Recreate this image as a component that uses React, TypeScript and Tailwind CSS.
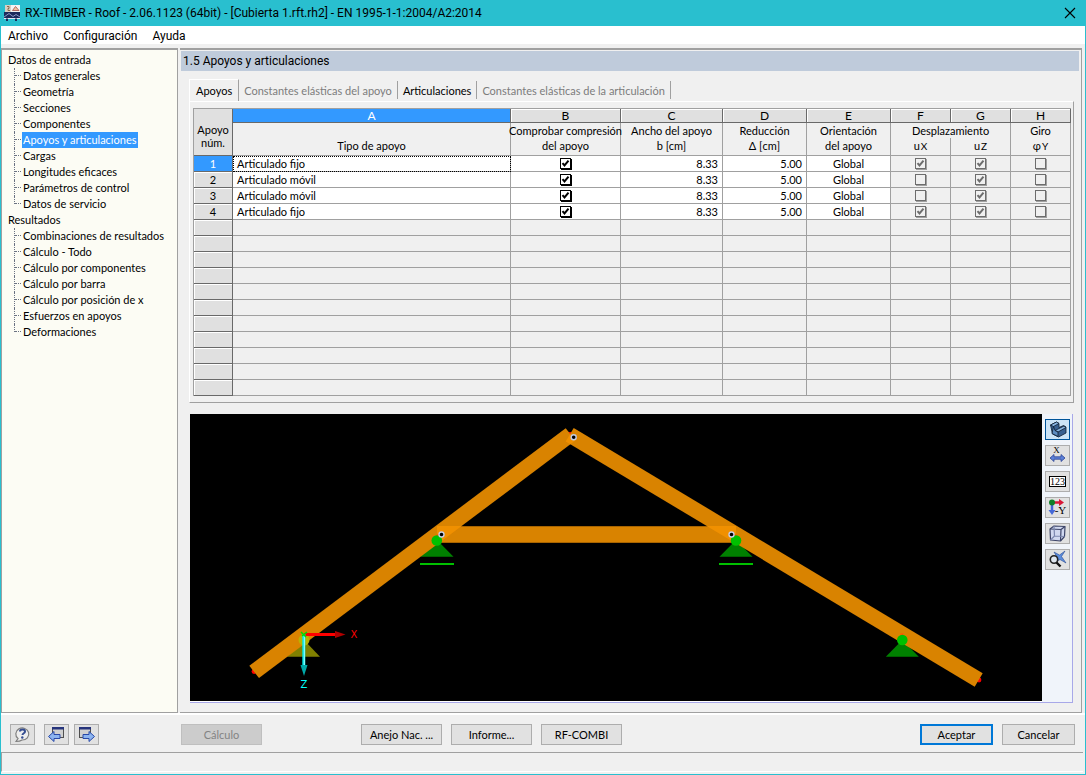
import { ReactNode } from "react";
import clsx from "clsx";

const inputItems = [
  "Datos generales",
  "Geometría",
  "Secciones",
  "Componentes",
  "Apoyos y articulaciones",
  "Cargas",
  "Longitudes eficaces",
  "Parámetros de control",
  "Datos de servicio",
];

const resultItems = [
  "Combinaciones de resultados",
  "Cálculo - Todo",
  "Cálculo por componentes",
  "Cálculo por barra",
  "Cálculo por posición de x",
  "Esfuerzos en apoyos",
  "Deformaciones",
];

type Support = {
  type: string;
  width: string;
  reduction: string;
  orientation: string;
  ux: boolean;
  uz: boolean;
  phi: boolean;
};

const supports: Support[] = [
  { type: "Articulado fijo", width: "8.33", reduction: "5.00", orientation: "Global", ux: true, uz: true, phi: false },
  { type: "Articulado móvil", width: "8.33", reduction: "5.00", orientation: "Global", ux: false, uz: true, phi: false },
  { type: "Articulado móvil", width: "8.33", reduction: "5.00", orientation: "Global", ux: false, uz: true, phi: false },
  { type: "Articulado fijo", width: "8.33", reduction: "5.00", orientation: "Global", ux: true, uz: true, phi: false },
];

const emptyRows = Array.from({ length: 11 }, (_, i) => i);
const columns = ["A", "B", "C", "D", "E", "F", "G", "H"];

function AppIcon() {
  return (
    <svg width="16" height="16" viewBox="0 0 16 16" aria-hidden="true">
      <rect x="1" width="6" height="7" fill="#d8cfc4" />
      <path d="M3 1.5h2v2H4v2h2" stroke="#8a6a4a" fill="none" />
      <rect x="7" width="9" height="7" fill="#f4f4f4" />
      <path d="M8.5 5.5l3-4 3.5 4z" fill="#f0c0a0" stroke="#a05048" strokeWidth=".8" />
      <rect y="7" width="16" height="6" fill="#1c2a5c" />
      <path d="M0 12l5-3.5 4 3 3-2 4 2.5" stroke="#8c98c4" fill="none" />
      <path d="M0 13.5h16" stroke="#e4e8f4" />
      <path d="M3 16v-2.5M12 16v-2.5" stroke="#1c2a5c" strokeWidth="2" />
    </svg>
  );
}

function TreeGroup({ label, items, active }: { label: string; items: string[]; active?: string }) {
  return (
    <li>
      <a href="#" className="block">{label}</a>
      <ul className="ml-1.5">
        {items.map((item, i) => (
          <li key={item} className="flex h-4">
            <span
              className={clsx(
                "w-px border-l border-dotted border-gray-500",
                i === items.length - 1 ? "h-2" : "h-4"
              )}
            />
            <span className="mr-px h-2 w-1.5 border-b border-dotted border-gray-500" />
            <a href="#" className={clsx("pr-0.5 pl-px", item === active && "bg-[#3399ff] text-white")}>
              {item}
            </a>
          </li>
        ))}
      </ul>
    </li>
  );
}

function Check({ label, checked, disabled }: { label: string; checked: boolean; disabled?: boolean }) {
  return (
    <span className="mx-auto grid w-[11px]">
      <input
        type="checkbox"
        aria-label={label}
        defaultChecked={checked}
        disabled={disabled}
        className="peer col-start-1 row-start-1 size-[11px] appearance-none border border-black bg-white shadow-[1px_1px_0_#000] disabled:border-[#6d6d6d] disabled:bg-[#f0f0f0] disabled:shadow-[1px_1px_0_#a0a0a0]"
      />
      <svg
        viewBox="0 0 11 11"
        className="pointer-events-none invisible col-start-1 row-start-1 size-[11px] text-black peer-checked:visible peer-disabled:text-[#6d6d6d]"
      >
        <path d="M2.5 5.2l2 2.3 4-4.8" fill="none" stroke="currentColor" strokeWidth="2" />
      </svg>
    </span>
  );
}

function RowHead({ children, active }: { children?: ReactNode; active?: boolean }) {
  return (
    <th
      scope="row"
      className={clsx(
        "h-4 border-r border-b border-[#696969] p-0 font-normal",
        active
          ? "bg-[#3399ff] text-white"
          : "bg-[#e0e0e0] shadow-[inset_1px_1px_0_#fff]"
      )}
    >
      {children}
    </th>
  );
}

const cell = "h-4 border-r border-b border-[#a0a0a0] p-0";
const headCell = "border-r border-b border-[#a0a0a0] p-0 align-top font-normal whitespace-nowrap";

function SupportsTable() {
  return (
    <table className="w-full table-fixed border-separate border-spacing-0 border-t border-l border-[#a0a0a0] text-[11px] leading-[15px]">
      <colgroup>
        <col className="w-[39px]" />
        <col />
        <col className="w-[110px]" />
        <col className="w-[102px]" />
        <col className="w-[84px]" />
        <col className="w-[84px]" />
        <col className="w-[60px]" />
        <col className="w-[60px]" />
        <col className="w-[60px]" />
      </colgroup>
      <thead>
        <tr>
          <th
            rowSpan={3}
            className="border-r border-b border-[#696969] bg-[#e0e0e0] p-0 pt-2 leading-[13px] font-normal"
          >
            Apoyo
            <br />
            núm.
          </th>
          {columns.map((letter) => (
            <th
              key={letter}
              className={clsx(
                "h-[14px] border-r border-b border-[#696969] p-0 text-xs leading-[13px] font-normal",
                letter === "A" ? "bg-[#3399ff] text-white" : "bg-[#e0e0e0] shadow-[inset_1px_1px_0_#fff]"
              )}
            >
              {letter}
            </th>
          ))}
        </tr>
        <tr>
          <th rowSpan={2} className={headCell}>
            <br />
            Tipo de apoyo
          </th>
          <th rowSpan={2} className={headCell}>
            <span className="flex justify-center">Comprobar compresión</span>
            del apoyo
          </th>
          <th rowSpan={2} className={headCell}>
            Ancho del apoyo
            <br />b [cm]
          </th>
          <th rowSpan={2} className={headCell}>
            Reducción
            <br />Δ [cm]
          </th>
          <th rowSpan={2} className={headCell}>
            Orientación
            <br />
            del apoyo
          </th>
          <th colSpan={2} className="h-[15px] border-r border-[#a0a0a0] p-0 font-normal">
            Desplazamiento
          </th>
          <th className="h-[15px] border-r border-[#a0a0a0] p-0 font-normal">Giro</th>
        </tr>
        <tr>
          <th className={clsx(headCell, "h-[18px]")}>
            u<span className="ml-px text-[10px]">X</span>
          </th>
          <th className={clsx(headCell, "h-[18px]")}>
            u<span className="ml-px text-[10px]">Z</span>
          </th>
          <th className={clsx(headCell, "h-[18px]")}>
            φ<span className="ml-px text-[10px]">Y</span>
          </th>
        </tr>
      </thead>
      <tbody>
        {supports.map((s, i) => (
          <tr key={i}>
            <RowHead active={i === 0}>{i + 1}</RowHead>
            <td className={clsx(cell, "bg-white pl-1", i === 0 && "outline-1 -outline-offset-1 outline-dotted outline-black")}>
              {s.type}
            </td>
            <td className={clsx(cell, "bg-white")}>
              <Check label={`Comprobar compresión del apoyo ${i + 1}`} checked />
            </td>
            <td className={clsx(cell, "bg-white pr-1 text-right")}>{s.width}</td>
            <td className={clsx(cell, "bg-white pr-1 text-right")}>{s.reduction}</td>
            <td className={clsx(cell, "bg-white text-center")}>{s.orientation}</td>
            <td className={cell}>
              <Check label={`uX ${i + 1}`} checked={s.ux} disabled />
            </td>
            <td className={cell}>
              <Check label={`uZ ${i + 1}`} checked={s.uz} disabled />
            </td>
            <td className={cell}>
              <Check label={`φY ${i + 1}`} checked={s.phi} disabled />
            </td>
          </tr>
        ))}
        {emptyRows.map((row) => (
          <tr key={row}>
            <RowHead />
            {columns.map((letter) => (
              <td key={letter} className={cell} />
            ))}
          </tr>
        ))}
      </tbody>
    </table>
  );
}

function Hinge({ x, y }: { x: number; y: number }) {
  return <circle cx={x} cy={y} r="2.5" fill="#000" stroke="#c4cce4" strokeWidth="1.4" />;
}

function TrussView() {
  return (
    <svg viewBox="190 414 852 287" className="h-full w-full" role="img" aria-label="Cubierta">
      <defs>
        <clipPath id="tie">
          <rect x="437" y="526" width="299" height="17" />
        </clipPath>
        <clipPath id="leftRafter">
          <path d="M565.7 428.3L575.4 440.6L259 678L249.3 665.7z" />
        </clipPath>
      </defs>
      {/* support bases */}
      <g fill="#008000">
        <path d="M437 540L453.5 556.7H420.5z" />
        <path d="M736 540L752.5 556.7H719.5z" />
        <path d="M902.3 640L918.8 656.7H885.8z" />
      </g>
      <path d="M304 640L320 656.7H287z" fill="#808000" />
      <g fill="#00c000">
        <rect x="420" y="563" width="34" height="2" />
        <rect x="719" y="563" width="34" height="2" />
      </g>
      <g fill="#ff0000">
        <circle cx="254" cy="671.5" r="2.4" />
        <circle cx="979" cy="680" r="2.4" />
        <path d="M567 432h6l-2 5z" />
      </g>
      {/* beams */}
      <rect x="437" y="526" width="299" height="17" fill="#d98300" />
      <path d="M437 526.5H736M437 542.5H736" stroke="#a86400" />
      <path d="M565.7 428.3L575.4 440.6L259 678L249.3 665.7z" fill="#d98300" />
      <path d="M573.7 428L982.7 673.3L974.7 686.7L565.7 441.4z" fill="#d98300" />
      <g fill="#f09000">
        <path d="M565.7 428.3L575.4 440.6L259 678L249.3 665.7z" clipPath="url(#tie)" />
        <path d="M573.7 428L982.7 673.3L974.7 686.7L565.7 441.4z" clipPath="url(#tie)" />
        <path d="M573.7 428L982.7 673.3L974.7 686.7L565.7 441.4z" clipPath="url(#leftRafter)" />
      </g>
      {/* nodes */}
      <g fill="#ff5a00">
        <circle cx="438" cy="536" r="2" />
        <circle cx="735" cy="536" r="2" />
        <circle cx="902" cy="635" r="2" />
      </g>
      <g fill="#00c000">
        <circle cx="436.8" cy="540.5" r="5.3" />
        <circle cx="736" cy="540.5" r="5.3" />
        <circle cx="902.3" cy="640" r="5.3" />
      </g>
      <circle cx="304" cy="640" r="5.5" fill="#b8b400" />
      <Hinge x={441.5} y={534.5} />
      <Hinge x={731.5} y={534.5} />
      <Hinge x={573.7} y={437.2} />
      {/* axes */}
      <path d="M304 634.5H336" stroke="#ff0000" strokeWidth="3" />
      <path d="M335 631L345.5 634.5L335 638z" fill="#b00000" />
      <path d="M303.8 634V666" stroke="#00e8e8" strokeWidth="3" />
      <path d="M304.3 634V666" stroke="#a0ffff" strokeWidth="1" />
      <path d="M300.5 665L304 676L307.5 665z" fill="#00a8a8" />
      <path d="M301 632l5 5M307 632l-5 4" stroke="#00e000" strokeWidth="1.5" />
      <g className="font-['DejaVu_Sans',sans-serif] text-[10px]" textAnchor="middle">
        <text x="354" y="638" fill="#ff0000">X</text>
        <text x="304" y="688" fill="#00ffff">Z</text>
      </g>
    </svg>
  );
}

const viewTools = [
  {
    label: "Vista renderizada",
    icon: (
      <g stroke="#0c1c30" strokeWidth=".8" strokeLinejoin="round">
        <path d="M1.5 4l6-3 2.5 1.5v4l4.5-2 2.5 1.5v6l-7.5 4-6-3z" fill="#386090" />
        <path d="M1.5 4l6-3L10 2.5 4.5 5.5z" fill="#88b4e0" />
        <path d="M6 9.5l9-4.5 2 1.5-8 4.5z" fill="#88b4e0" />
        <path d="M4.5 5.5L6 9.5l3 1.5v4.5l-6-3z" fill="#5c8cc0" />
      </g>
    ),
  },
  {
    label: "Dimensiones",
    icon: (
      <>
        <text x="7.5" y="6" textAnchor="middle" className="font-['Liberation_Serif',serif] text-[9px]">X</text>
        <path d="M1 11l4-3.5v2.3h7V7.5l4 3.5-4 3.5v-2.3H5v2.3z" fill="#5c80d8" stroke="#2c4494" strokeWidth=".8" />
      </>
    ),
  },
  {
    label: "Numeración",
    icon: (
      <>
        <rect x=".5" y="3.5" width="16" height="10" fill="#fff" stroke="#000" />
        <text x="8.5" y="12" textAnchor="middle" className="font-['Liberation_Serif',serif] text-[10px]">123</text>
      </>
    ),
  },
  {
    label: "Vista en dirección -Y",
    icon: (
      <>
        <path d="M3 3.5h8" stroke="#d81838" strokeWidth="2.5" />
        <path d="M10 0l5 3.5-5 3.5z" fill="#d81838" />
        <path d="M3 4v8" stroke="#4468d8" strokeWidth="2.5" />
        <path d="M-.5 11h7L3 16z" fill="#4468d8" />
        <circle cx="3" cy="3.5" r="3" fill="#108028" />
        <text x="11.5" y="15" textAnchor="middle" className="font-['Liberation_Serif',serif] text-[11px]">-Y</text>
      </>
    ),
  },
  {
    label: "Vista isométrica",
    icon: (
      <g fill="none" stroke="#3c4468" strokeWidth="1.2" strokeLinejoin="round">
        <path d="M1 4l4-3 11 .5-.5 10-4 4.5L1.5 15z" fill="#d0d8f0" />
        <path d="M1 4l11 .5-.5 11.5M12 4.5l4-3" />
        <path d="M5 1l.5 10 10 .5M5.5 11l-4 4" stroke="#7c88b0" />
      </g>
    ),
  },
  {
    label: "Mostrar todo",
    icon: (
      <>
        <path d="M5 1l5.5 3L16 0l-3.5 5.5L17 12l-6-3.5L5 12l3-6z" fill="#5c8cdc" stroke="#284c94" strokeWidth=".6" />
        <circle cx="5" cy="8.5" r="3.7" fill="#dfe6ee" stroke="#222" strokeWidth="1.6" />
        <path d="M7.5 11.5l4 4" stroke="#111" strokeWidth="2.4" />
      </>
    ),
  },
];

function HelpIcon() {
  return (
    <svg width="17" height="17" viewBox="0 0 17 17" aria-hidden="true">
      <path d="M2 15.5l2-3A6.5 6 0 1 1 8 14q-2 1.5-6 1.5z" fill="#eeeeee" stroke="#808080" strokeWidth="1.2" />
      <path d="M6 5.5C6 2.8 11 2.8 11 5.5 11 7.5 8.5 7 8.5 9" fill="none" stroke="#344c90" strokeWidth="2" />
      <circle cx="8.3" cy="11.5" r="1.2" fill="#344c90" />
    </svg>
  );
}

function WindowArrowIcon({ forward }: { forward?: boolean }) {
  return (
    <svg width="17" height="17" viewBox="0 0 17 17" aria-hidden="true">
      <rect x={forward ? 1.5 : 4.5} y="1.5" width="11" height="10" fill="#d0d0d0" stroke="#505050" />
      <rect x={forward ? 1 : 4} y="1" width="12" height="2.5" fill="#26347c" />
      <path
        d={forward ? "M16.5 10.5L11 5.5v3H5v4h6v3z" : "M.5 10.5L6 5.5v3h6v4H6v3z"}
        fill="#8cb4f0"
        stroke="#2848a8"
      />
    </svg>
  );
}

const iconButton = "flex h-[21px] w-[25px] items-center justify-center border border-[#adadad] bg-[#e1e1e1]";
const pushButton = "h-[21px] w-[81px] border border-[#adadad] bg-[#e1e1e1] text-center leading-[19px]";

const tabs = [
  { label: "Constantes elásticas del apoyo", disabled: true },
  { label: "Articulaciones", disabled: false },
  { label: "Constantes elásticas de la articulación", disabled: true },
];

export default function App() {
  return (
    <div className="flex min-h-screen flex-col border border-t-0 border-[#29bfcf] bg-[#f0f0f0] font-['Lato','Noto_Sans',sans-serif] text-[11px] leading-4 text-black">
      <header className="font-['Roboto','Noto_Sans',sans-serif] text-xs">
        <div className="flex h-[26px] items-center gap-[5px] bg-[#29bfcf] pr-[9px] pl-[3px]">
          <AppIcon />
          <h1 className="flex-1">RX-TIMBER - Roof - 2.06.1123 (64bit) - [Cubierta 1.rft.rh2] - EN 1995-1-1:2004/A2:2014</h1>
          <button type="button" aria-label="Cerrar">
            <svg width="12" height="12" viewBox="0 0 12 12">
              <path d="M1 1l10 10M11 1L1 11" stroke="#000" strokeWidth="1.1" />
            </svg>
          </button>
        </div>
        <nav className="flex h-[18px] items-center gap-[15px] bg-white px-[7px] pt-0.5">
          <a href="#">Archivo</a>
          <a href="#">Configuración</a>
          <a href="#">Ayuda</a>
        </nav>
      </header>

      <main className="mt-1 flex flex-1 gap-0.5 border-b-2 border-white">
        <aside className="w-[177px] border border-t-2 border-[#a0a0a0] bg-[#fcfcf4] pl-1.5">
          <ul className="mt-0.5">
            <TreeGroup label="Datos de entrada" items={inputItems} active="Apoyos y articulaciones" />
            <TreeGroup label="Resultados" items={resultItems} />
          </ul>
        </aside>

        <section className="mr-[3px] flex min-w-0 flex-1 flex-col border-t-2 border-r border-b border-[#a0a0a0]">
          <h2 className="mt-px mr-0.5 ml-px h-5 bg-[#bfcbdb] pl-0.5 font-['Roboto','Noto_Sans',sans-serif] text-xs leading-5">
            1.5 Apoyos y articulaciones
          </h2>

          <div className="mt-2 mr-[7px] ml-[9px] flex">
            <button type="button" className="h-[22px] border-t border-r border-l border-t-white border-r-[#a0a0a0] border-l-white px-1.5 pt-px">
              Apoyos
            </button>
            {tabs.map((tab) => (
              <button
                key={tab.label}
                type="button"
                disabled={tab.disabled}
                className="mt-0.5 h-[18px] border-r border-[#a0a0a0] px-[5px] pt-0.5 whitespace-nowrap disabled:text-[#7c7c7c]"
              >
                {tab.label}
              </button>
            ))}
          </div>

          <div className="mr-[7px] ml-[9px] border border-t-white border-r-[#a0a0a0] border-b-[#a0a0a0] border-l-white pt-1.5 pr-0.5 pb-1.5 pl-[3px]">
            <SupportsTable />
          </div>

          <div className="mt-[11px] mr-2 mb-[9px] ml-2.5 flex flex-1 border-r border-b border-[#a8a8e8] bg-[#f0f4fa]">
            <div className="min-w-0 flex-1 border-b border-b-white bg-black">
              <TrussView />
            </div>
            <div className="ml-0.5 flex w-[28px] flex-col gap-[5px] pt-[5px] pl-px">
              {viewTools.map((tool, i) => (
                <button
                  key={tool.label}
                  type="button"
                  aria-label={tool.label}
                  className={clsx(iconButton, i === 0 && "border-[#005499]! bg-[#cce4f7]!")}
                >
                  <svg width="17" height="17" viewBox="0 0 17 17" className="overflow-visible">
                    {tool.icon}
                  </svg>
                </button>
              ))}
            </div>
          </div>
        </section>
      </main>

      <footer>
        <div className="flex gap-[9px] pt-[9px] pr-2.5 pb-[7px] pl-[9px]">
          <div className="flex w-[162px] gap-[5px]">
            <button type="button" aria-label="Ayuda" className={clsx(iconButton, "mr-1")}>
              <HelpIcon />
            </button>
            <button type="button" aria-label="Anterior" className={iconButton}>
              <WindowArrowIcon />
            </button>
            <button type="button" aria-label="Siguiente" className={iconButton}>
              <WindowArrowIcon forward />
            </button>
          </div>
          <button type="button" disabled className={clsx(pushButton, "mr-[90px] border-[#bfbfbf]! bg-[#cccccc]! text-[#838383]")}>
            Cálculo
          </button>
          <button type="button" className={pushButton}>Anejo Nac. ...</button>
          <button type="button" className={pushButton}>Informe...</button>
          <button type="button" className={pushButton}>RF-COMBI</button>
          <span className="flex-1" />
          <button type="button" className="h-[21px] w-[73px] border-2 border-[#0078d7] bg-[#e1e1e1] leading-[17px]">
            Aceptar
          </button>
          <button type="button" className="h-[21px] w-[73px] border border-[#adadad] bg-[#e1e1e1] leading-[19px]">
            Cancelar
          </button>
        </div>
        <div className="mr-0.5 mb-0.5 h-5 border-t border-b border-l border-t-[#a0a0a0] border-b-white border-l-[#a0a0a0]" />
      </footer>
    </div>
  );
}
